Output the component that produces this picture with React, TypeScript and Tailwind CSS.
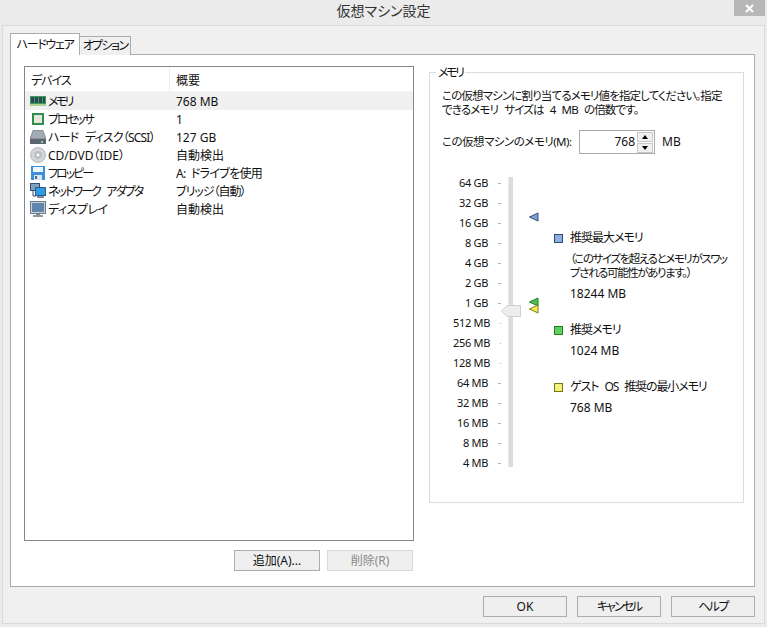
import React from "react";

const DEVICES = [
  { name: "メモリ", nameFit: "tracking-[-2.6px]", summary: "768 MB", summaryFit: "", icon: "memory" },
  { name: "プロセッサ", nameFit: "tracking-[-2px]", summary: "1", summaryFit: "", icon: "cpu" },
  { name: "ハード ディスク（SCSI）", nameFit: "tracking-[-0.8px] [word-spacing:4px]", summary: "127 GB", summaryFit: "", icon: "disk" },
  { name: "CD/DVD（IDE）", nameFit: "", summary: "自動検出", summaryFit: "", icon: "cd" },
  { name: "フロッピー", nameFit: "tracking-[-2px]", summary: "A: ドライブを使用", summaryFit: "tracking-[-0.7px] [word-spacing:3px]", icon: "floppy" },
  { name: "ネットワーク アダプタ", nameFit: "tracking-[-1.9px] [word-spacing:5px]", summary: "ブリッジ（自動）", summaryFit: "tracking-[-1px]", icon: "net" },
  { name: "ディスプレイ", nameFit: "tracking-[-0.5px]", summary: "自動検出", summaryFit: "", icon: "display" },
];

const SCALE = ["64 GB", "32 GB", "16 GB", "8 GB", "4 GB", "2 GB", "1 GB", "512 MB", "256 MB", "128 MB", "64 MB", "32 MB", "16 MB", "8 MB", "4 MB"];

function DeviceIcon({ type }: { type: string }) {
  if (type === "memory") {
    return (
      <svg width="16" height="16" viewBox="0 0 16 16">
        <rect x="0" y="3" width="16" height="10" fill="#3f9a5e" />
        <rect x="1" y="4" width="3" height="6" fill="#2a4a55" />
        <rect x="5" y="4" width="3" height="6" fill="#2a4a55" />
        <rect x="9" y="4" width="3" height="6" fill="#2a4a55" />
        <rect x="13" y="4" width="2" height="6" fill="#2a4a55" />
        <rect x="0" y="11" width="16" height="2" fill="#a9d38f" />
      </svg>
    );
  }
  if (type === "cpu") {
    return (
      <svg width="16" height="16" viewBox="0 0 16 16">
        <rect x="2" y="2" width="12" height="12" fill="#2f8f4a" />
        <rect x="4" y="4" width="8" height="8" fill="#e4e8dc" />
      </svg>
    );
  }
  if (type === "disk") {
    return (
      <svg width="16" height="16" viewBox="0 0 16 16">
        <path d="M3 1.5h10l3 8.5H0z" fill="#a3abb5" stroke="#59626c" strokeWidth="0.6" />
        <rect x="0" y="10" width="16" height="5" fill="#5d6670" />
        <rect x="11" y="12" width="2" height="2" fill="#7fe07f" />
      </svg>
    );
  }
  if (type === "cd") {
    return (
      <svg width="16" height="16" viewBox="0 0 16 16">
        <circle cx="8" cy="8" r="7.5" fill="#d4d6da" stroke="#a8abb0" strokeWidth="0.8" />
        <circle cx="8" cy="8" r="4" fill="#bfc2c8" />
        <circle cx="8" cy="8" r="2" fill="#fff" stroke="#9a9da3" strokeWidth="0.6" />
      </svg>
    );
  }
  if (type === "floppy") {
    return (
      <svg width="16" height="16" viewBox="0 0 16 16">
        <rect x="1" y="1" width="14" height="14" fill="#3f8fd8" />
        <rect x="3" y="2" width="10" height="5" fill="#eef6fd" />
        <rect x="4" y="10" width="8" height="5" fill="#dbe6ef" />
        <rect x="5" y="11" width="2" height="3" fill="#3a6ea5" />
      </svg>
    );
  }
  if (type === "net") {
    return (
      <svg width="16" height="16" viewBox="0 0 16 16">
        <rect x="0.5" y="0.5" width="9" height="7" fill="#7f9fc0" stroke="#34506e" />
        <path d="M3 8v5h3" fill="none" stroke="#34506e" />
        <rect x="5.5" y="4.5" width="10" height="8" fill="#2f9be8" stroke="#2d5a86" />
        <rect x="7" y="13" width="7" height="2" fill="#7a8b9c" />
      </svg>
    );
  }
  return (
    <svg width="16" height="16" viewBox="0 0 16 16">
      <rect x="0.5" y="0.5" width="15" height="12" fill="#c9d2dc" stroke="#6d7a88" />
      <rect x="2" y="2" width="12" height="9" fill="#5f86ad" />
      <rect x="6" y="13" width="4" height="1" fill="#7b8693" />
      <rect x="3" y="14" width="10" height="2" fill="#8d98a5" />
    </svg>
  );
}

function Marker({ fill, stroke }: { fill: string; stroke: string }) {
  return (
    <svg width="10" height="10" viewBox="0 0 10 10">
      <path d="M0.5 5L9 1v8z" fill={fill} stroke={stroke} strokeWidth="1" />
    </svg>
  );
}

function Swatch({ className }: { className: string }) {
  return <span className={`block w-[9px] h-[9px] border shrink-0 ${className}`} />;
}

function DialogButton({ label, disabled, className }: { label: string; disabled?: boolean; className: string }) {
  return (
    <div
      className={`flex items-center justify-center h-[21px] border pt-[1px] whitespace-nowrap ${className} ${
        disabled ? "border-[#d9d9d9] bg-[#efefef] text-[#8a8a8a]" : "border-[#acacac] bg-[#efefef] text-[#111]"
      }`}
    >
      {label}
    </div>
  );
}

function DeviceList() {
  return (
    <div className="flex flex-col">
      <div className="w-[390px] h-[475px] border border-[#828790] bg-white">
        <div className="flex h-[25px] items-center bg-white border-b border-[#f0f5fa]">
          <div className="w-[145px] h-full flex items-center pl-[6px] pt-[3px] border-r border-[#e5eef6] tracking-[-1px]">デバイス</div>
          <div className="pl-[6px] pt-[3px]">概要</div>
        </div>
        {DEVICES.map((d, i) => (
          <div key={d.name} className={`flex h-[18px] items-center ${i === 0 ? "bg-[#f0f0f0]" : ""}`}>
            <div className="w-[145px] flex items-center pl-[5px] gap-[2px] whitespace-nowrap">
              <DeviceIcon type={d.icon} />
              <span className={`pt-[2px] ${d.nameFit}`}>{d.name}</span>
            </div>
            <div className={`pl-[6px] pt-[2px] whitespace-nowrap ${d.summaryFit}`}>{d.summary}</div>
          </div>
        ))}
      </div>
      <div className="flex justify-end gap-[7px] pt-[9px] pr-[1px]">
        <DialogButton label="追加(A)..." className="w-[86px]" />
        <DialogButton label="削除(R)" disabled className="w-[86px]" />
      </div>
    </div>
  );
}

function MemorySlider() {
  return (
    <div className="relative w-[101px] h-[290px] ml-[23px] shrink-0">
      <div className="flex flex-col -mt-[4px]">
        {SCALE.map((s) => (
          <div key={s} className="flex items-center justify-end h-[20px] pr-[53px] gap-[10px] text-[11px] tracking-[-0.3px] whitespace-nowrap">
            <span>{s}</span>
            <span className="w-[3px] h-px bg-[#b5b5b5]" />
          </div>
        ))}
      </div>
      <div className="absolute left-[55px] top-0 w-[5px] h-[290px] bg-[#dcdcdc] border-l border-[#e8e8e8]" />
      <svg className="absolute left-[48px] top-[128px]" width="20" height="12" viewBox="0 0 20 12">
        <path d="M0.5 6L6 0.5h13.5v11H6z" fill="#ededed" stroke="#cfcfcf" />
      </svg>
      <div className="absolute left-[76px] top-[35px]"><Marker fill="#7f9fd0" stroke="#2f4f80" /></div>
      <div className="absolute left-[76px] top-[120px]"><Marker fill="#50c050" stroke="#1f7f1f" /></div>
      <div className="absolute left-[76px] top-[127px]"><Marker fill="#f2ee5a" stroke="#7f7a10" /></div>
    </div>
  );
}

function MemoryPanel() {
  return (
    <div className="relative w-[315px] h-[431px] mt-[6px] border border-[#dcdcdc] bg-white">
      <span className="absolute left-[6px] -top-[8px] bg-white px-[2px] leading-[15px] tracking-[-2.4px]">メモリ</span>
      <div className="pl-[12px] pt-[16px] leading-[14px] w-[305px] whitespace-nowrap text-[11.5px] tracking-[-0.85px] [word-spacing:4px]">
        <p>この仮想マシンに割り当てるメモリ値を指定してください。指定</p>
        <p>できるメモリ サイズは 4 MB の倍数です。</p>
      </div>
      <div className="flex items-center pl-[12px] mt-[13px] h-[24px]">
        <span className="w-[137px] whitespace-nowrap text-[11.5px] tracking-[-0.5px]">この仮想マシンのメモリ(M):</span>
        <div className="flex items-center justify-end w-[76px] h-[24px] border border-[#ababab] pr-[1px]">
          <span className="pr-[1px]">768</span>
          <div className="flex flex-col ml-[1px] w-[16px] gap-px">
            <div className="h-[10px] flex items-center justify-center bg-[#f0f0f0] border border-[#c8c8c8]">
              <span className="w-0 h-0 border-x-[3px] border-x-transparent border-b-[4px] border-b-black" />
            </div>
            <div className="h-[10px] flex items-center justify-center bg-[#f0f0f0] border border-[#c8c8c8]">
              <span className="w-0 h-0 border-x-[3px] border-x-transparent border-t-[4px] border-t-black" />
            </div>
          </div>
        </div>
        <span className="pl-[7px]">MB</span>
      </div>
      <div className="flex mt-[23px]">
        <MemorySlider />
        <div className="pt-[53px] w-[190px]">
          <div className="flex items-center gap-[7px] h-[16px]">
            <Swatch className="bg-[#8fb0dc] border-[#2c4a78]" />
            <span className="tracking-[-1px]">推奨最大メモリ</span>
          </div>
          <p className="pl-[16px] mt-[6px] leading-[14px] whitespace-nowrap text-[11.5px] tracking-[-1.4px]">（このサイズを超えるとメモリがスワッ<br />プされる可能性があります。）</p>
          <p className="pl-[16px] mt-[6px] h-[16px]">18244 MB</p>
          <div className="flex items-center gap-[7px] h-[16px] mt-[20px]">
            <Swatch className="bg-[#5fd05f] border-[#1f7f1f]" />
            <span className="tracking-[-1px]">推奨メモリ</span>
          </div>
          <p className="pl-[16px] mt-[5px] h-[16px]">1024 MB</p>
          <div className="flex items-center gap-[7px] h-[16px] mt-[20px]">
            <Swatch className="bg-[#f5f27a] border-[#77741a]" />
            <span className="tracking-[-1.1px] [word-spacing:4px]">ゲスト OS 推奨の最小メモリ</span>
          </div>
          <p className="pl-[16px] mt-[5px] h-[16px]">768 MB</p>
        </div>
      </div>
    </div>
  );
}

export default function App() {
  return (
    <div className="relative w-[767px] h-[627px] overflow-hidden bg-[#ebebeb] flex flex-col text-[12px] leading-[16px] text-[#111] font-['Noto_Sans','Noto_Sans_CJK_JP',sans-serif] [font-feature-settings:'palt']">
      <div className="h-[25px] flex items-center justify-center pb-[3px] text-[14px] text-[#333] shrink-0">仮想マシン設定</div>
      <button className="absolute right-[2px] top-0 w-[31px] h-[16px] bg-[#b7b7b7] flex items-center justify-center">
        <svg width="9" height="9" viewBox="0 0 9 9">
          <path d="M1 1l7 7M8 1L1 8" stroke="#fff" strokeWidth="2" />
        </svg>
      </button>
      <div className="mx-[2px] mb-[3px] flex-1 border border-[#dadada] bg-[#f0f0f0] pl-[7px] pr-[9px] flex flex-col">
        <div className="flex items-end h-[29px] -mb-px relative">
          <div className="h-[22px] w-[70px] border border-b-0 border-[#acacac] bg-white flex items-center justify-center relative z-10 whitespace-nowrap tracking-[-1.3px]">ハードウェア</div>
          <div className="h-[19px] w-[51px] border border-b-0 border-l-0 border-[#acacac] bg-[#f0f0f0] flex items-center justify-center whitespace-nowrap tracking-[-1.6px]">オプション</div>
        </div>
        <div className="h-[533px] border border-[#acacac] bg-white flex pl-[13px] pt-[11px] gap-[15px]">
          <DeviceList />
          <MemoryPanel />
        </div>
        <div className="flex justify-end gap-[10px] pt-[9px]">
          <DialogButton label="OK" className="w-[84px]" />
          <DialogButton label="キャンセル" className="w-[84px] tracking-[-2px]" />
          <DialogButton label="ヘルプ" className="w-[84px] tracking-[-1.5px]" />
        </div>
      </div>
    </div>
  );
}
